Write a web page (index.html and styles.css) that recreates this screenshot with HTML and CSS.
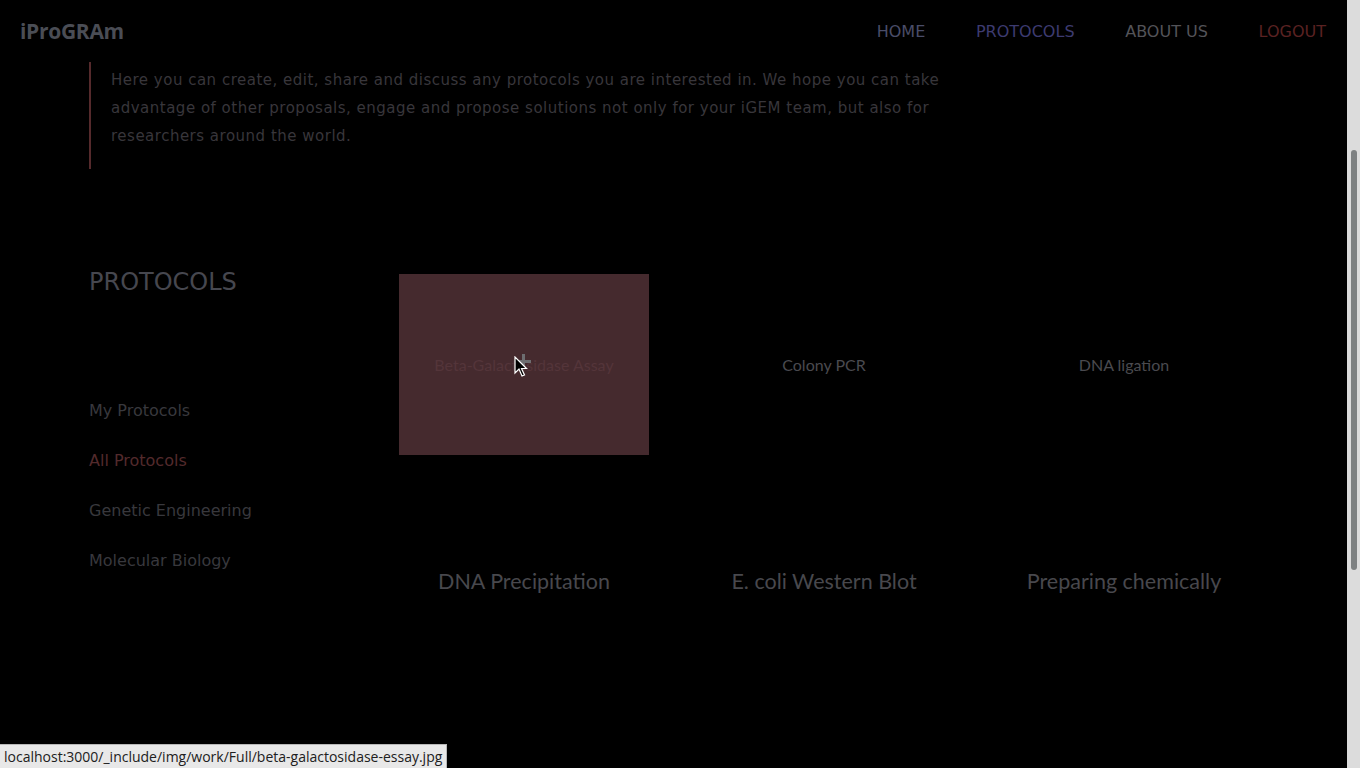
FILE: index.html
```html
<!DOCTYPE html>
<html>
<head>
<meta charset="utf-8">
<link rel="stylesheet" href="styles.css">
</head>
<body>
<header class="navbar">
  <a class="logo">iProGRAm</a>
  <nav class="menu">
    <a class="nav-home">HOME</a>
    <a class="nav-protocols">PROTOCOLS</a>
    <a class="nav-about">ABOUT US</a>
    <a class="nav-logout">LOGOUT</a>
  </nav>
</header>
<main class="page">
  <blockquote class="intro">
    Here you can create, edit, share and discuss any protocols you are interested in. We hope you can take advantage of other proposals, engage and propose solutions not only for your iGEM team, but also for researchers around the world.
  </blockquote>
  <section class="protocols">
    <aside class="sidebar">
      <h2 class="title">PROTOCOLS</h2>
      <ul class="filters">
        <li>My Protocols</li>
        <li class="active">All Protocols</li>
        <li>Genetic Engineering</li>
        <li>Molecular Biology</li>
      </ul>
    </aside>
    <div class="grid">
      <div class="cell hover">
        <div class="card">
          <span class="card-title">Beta-Galactosidase Assay</span>
          <span class="plus"></span>
        </div>
      </div>
      <div class="cell"><div class="card"><span class="card-title">Colony PCR</span></div></div>
      <div class="cell"><div class="card"><span class="card-title">DNA ligation</span></div></div>
      <div class="cell"><div class="card big"><span class="card-title">DNA Precipitation</span></div></div>
      <div class="cell"><div class="card big"><span class="card-title">E. coli Western Blot</span></div></div>
      <div class="cell"><div class="card big"><span class="card-title">Preparing chemically</span></div></div>
    </div>
  </section>
</main>
<div class="scrollbar"><div class="thumb"></div></div>
<div class="status">localhost:3000/_include/img/work/Full/beta-galactosidase-essay.jpg</div>
<svg class="cursor" width="14" height="22" viewBox="0 0 14 22"><path d="M1 1 L1 17 L5 13 L8 20 L10.5 19 L7.5 12.5 L12.5 12.5 Z" fill="#000" stroke="#fff" stroke-width="1.2" stroke-linejoin="miter"/></svg>
</body>
</html>
```

FILE: styles.css
```css
html, body {
  margin: 0;
  padding: 0;
  background: #000;
  overflow: hidden;
  height: 768px;
}
body {
  font-family: "DejaVu Sans", sans-serif;
  color: #37353a;
  width: 1347px;
  position: relative;
}
a { text-decoration: none; }

.navbar {
  height: 62px;
  display: flex;
  align-items: center;
  justify-content: space-between;
  padding: 0 21px 0 20px;
  box-sizing: border-box;
}
.logo {
  font-family: "Open Sans", sans-serif;
  font-weight: 700;
  font-size: 21px;
  letter-spacing: -0.3px;
  color: #4a4d55;
}
.menu {
  display: flex;
  gap: 50.7px;
  font-size: 16px;
}
.nav-home { color: #4a4d68; }
.nav-protocols { color: #3d3b70; }
.nav-about { color: #535358; }
.nav-logout { color: #5a2222; }

.page { padding-left: 89px; }

.intro {
  margin: 0;
  width: 860px;
  border-left: 2px solid #552a2c;
  padding: 4px 0 19px 20px;
  font-size: 15px;
  line-height: 28px;
  color: #38363b;
  letter-spacing: 0.5px;
}

.protocols {
  display: flex;
  margin-top: 84px;
}
.sidebar { width: 285px; }
.title {
  margin: 0;
  font-weight: 400;
  font-size: 24px;
  color: #46474f;
  line-height: 40px;
  padding-top: 9px;
}
.filters {
  list-style: none;
  margin: 84px 0 0;
  padding: 0;
  font-size: 16px;
  color: #38383d;
}
.filters li {
  line-height: 50px;
  height: 50px;
}
.filters li.active { color: #532a2c; }

.grid {
  display: grid;
  grid-template-columns: repeat(3, 300px);
  row-gap: 35px;
  margin-top: 21px;
}
.cell {
  padding: 0 25px;
}
.card {
  height: 181px;
  display: flex;
  align-items: center;
  justify-content: center;
  position: relative;
  font-family: "Lato", sans-serif;
  font-size: 16px;
  color: #4a4a4f;
}
.card.big {
  font-size: 21.5px;
  color: #48484d;
}
.hover .card {
  background: #452a2e;
  color: #54353a;
}
.plus {
  position: absolute;
  left: 120px;
  top: 80px;
  width: 12px;
  height: 14px;
}
.plus::before, .plus::after {
  content: "";
  position: absolute;
  background: #6d6d70;
}
.plus::before { left: 3px; top: 0; width: 3px; height: 14px; }
.plus::after { left: 0; top: 6px; width: 12px; height: 3px; }

.scrollbar {
  position: fixed;
  top: 0;
  right: 0;
  width: 13px;
  height: 768px;
  background: #dcdcdc;
}
.thumb {
  position: absolute;
  left: 4px;
  top: 150px;
  width: 6px;
  height: 420px;
  border-radius: 3px;
  background: #7e8182;
}
.status {
  position: fixed;
  left: 0;
  bottom: 0;
  height: 24px;
  line-height: 23px;
  padding: 0 4px;
  background: #e8e8e8;
  border: 1px solid #b8b8b8;
  border-left: none;
  border-bottom: none;
  font-family: "Open Sans", sans-serif;
  font-size: 14px;
  color: #202020;
  box-sizing: border-box;
}
.cursor {
  position: fixed;
  left: 514px;
  top: 356px;
}
```
